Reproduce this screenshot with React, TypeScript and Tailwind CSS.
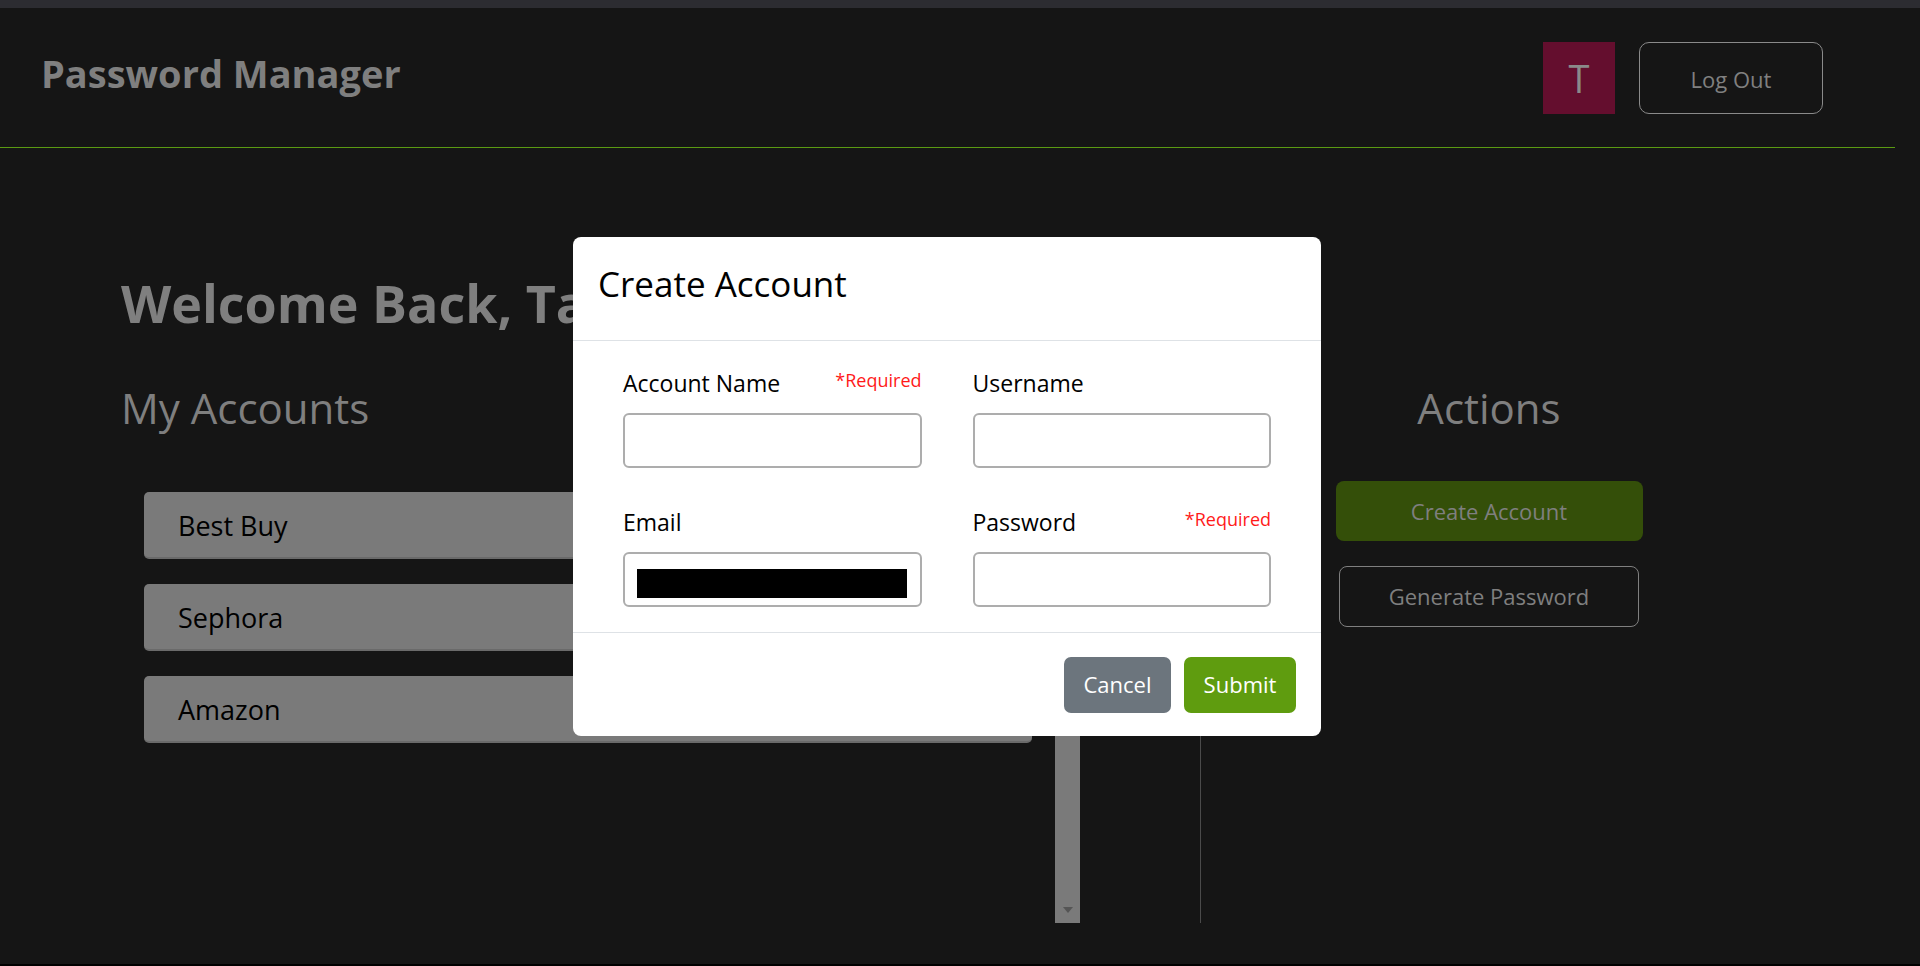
import { useState } from "react";

const accounts = ["Best Buy", "Sephora", "Amazon"];

export default function App() {
  const [isModalOpen] = useState(true);

  return (
    <div className="relative flex h-[966px] w-full flex-col overflow-hidden bg-[#151515] font-['Open_Sans',sans-serif]">
      <div className="h-[8px] shrink-0 bg-[#2c2c31]" />

      <header className="mr-[25px] flex h-[140px] shrink-0 items-center justify-between border-b border-[#5a9a12] pl-[41px] pr-[72px]">
        <h1 className="mb-[10px] text-[38px] font-bold leading-none text-[#7f7f7f]">Password Manager</h1>
        <div className="flex items-center gap-[24px]">
          <div className="grid h-[72px] w-[72px] place-items-center bg-[#640e2e] text-[38px] leading-none text-[#8a8a8a]">T</div>
          <button
            className="h-[72px] w-[184px] rounded-[10px] border border-[#8a8a8a] pt-[4px] text-[22px] text-[#808080]"
            type="button"
          >
            Log Out
          </button>
        </div>
      </header>

      <main className="flex-1 pl-[121px]">
        <h2 className="mt-[129px] text-[52px] font-bold leading-none text-[#7f7f7f]">Welcome Back, Taylor</h2>

        <div className="mt-[58px] flex h-[536px]">
          <section className="flex w-[959px] flex-col">
            <h3 className="text-[42px] leading-none text-[#7f7f7f]">My Accounts</h3>
            <div className="mt-[38px] flex flex-1">
              <div className="flex flex-1 flex-col gap-[25px] px-[23px] pt-[25px]">
                {accounts.map((account) => (
                  <div
                    className="flex h-[67px] items-center rounded-[5px] border-b-2 border-[#6a6a6a] bg-[#7a7a7a] pl-[34px] pt-[4px] text-[27px] text-black"
                    key={account}
                  >
                    {account}
                  </div>
                ))}
              </div>
              <div className="flex w-[25px] flex-col items-center justify-between bg-[#7a7a7a] py-[10px]">
                <span className="h-0 w-0 border-x-[5px] border-b-[6px] border-x-transparent border-b-[#555]" />
                <span className="h-0 w-0 border-x-[5px] border-t-[6px] border-x-transparent border-t-[#555]" />
              </div>
            </div>
          </section>

          <div className="ml-[120px] w-px bg-[#4a4a4a]" />

          <section className="flex w-[576px] flex-col items-center">
            <h3 className="text-[42px] leading-none text-[#7f7f7f]">Actions</h3>
            <button
              className="mt-[52px] h-[60px] w-[307px] rounded-[8px] bg-[#344f09] text-[22px] text-[#7f7f7f]"
              type="button"
            >
              Create Account
            </button>
            <button
              className="mt-[25px] h-[61px] w-[300px] rounded-[8px] border border-[#7f7f7f] text-[22px] text-[#7f7f7f]"
              type="button"
            >
              Generate Password
            </button>
          </section>
        </div>
      </main>

      <div className="h-[2px] shrink-0 bg-black" />

      {isModalOpen ? <CreateAccountModal /> : null}
    </div>
  );
}

function CreateAccountModal() {
  return (
    <div className="absolute left-[573px] top-[237px] flex h-[499px] w-[748px] flex-col rounded-[8px] bg-white text-black">
      <div className="flex h-[104px] shrink-0 items-center border-b border-[#dee2e6] pb-[10px] pl-[25px]">
        <h4 className="text-[35px] font-medium leading-none">Create Account</h4>
      </div>

      <div className="grid flex-1 grid-cols-2 content-start gap-x-[51px] gap-y-[40px] px-[50px] pt-[28px]">
        <Field label="Account Name" required />
        <Field label="Username" />
        <Field label="Email" redacted />
        <Field label="Password" required />
      </div>

      <div className="flex h-[104px] shrink-0 items-center justify-end gap-[13px] border-t border-[#dee2e6] pr-[25px]">
        <button className="h-[56px] w-[107px] rounded-[7px] bg-[#6c757d] text-[22px] text-white" type="button">
          Cancel
        </button>
        <button className="h-[56px] w-[112px] rounded-[7px] bg-[#5f9c0f] text-[22px] text-white" type="button">
          Submit
        </button>
      </div>
    </div>
  );
}

function Field({ label, redacted, required }: { label: string; redacted?: boolean; required?: boolean }) {
  return (
    <div className="h-[99px]">
      <div className="flex h-[44px] items-start justify-between pt-[3px]">
        <span className="text-[23px] leading-none">{label}</span>
        {required ? <span className="-mt-[1px] text-[18px] leading-none text-[#ff1a1a]">*Required</span> : null}
      </div>
      <div className="h-[55px] rounded-[6px] border-2 border-[#adadad] bg-white pl-[12px] pt-[15px]">
        {redacted ? <div className="h-[29px] w-[270px] bg-black" /> : null}
      </div>
    </div>
  );
}
